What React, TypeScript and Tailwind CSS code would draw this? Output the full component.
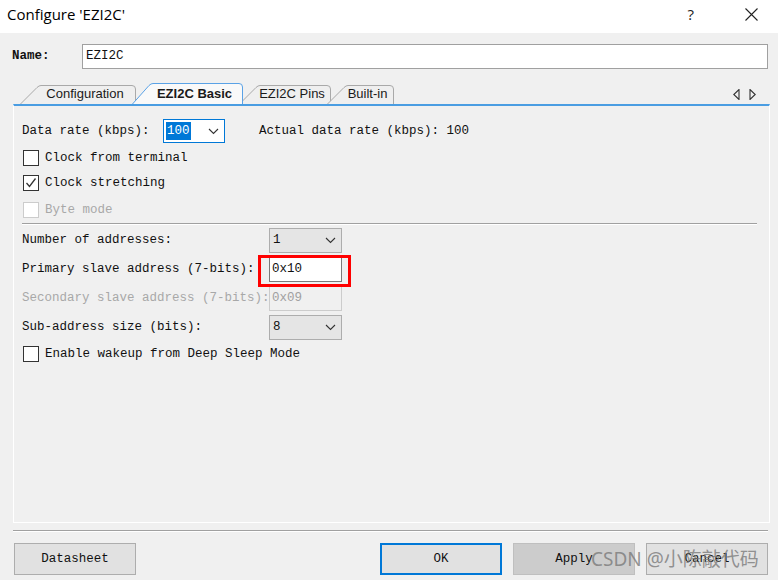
import React from "react";

const mono = "font-['Liberation_Mono',monospace] text-[12.5px] text-[#111]";

function Tab({ label, width, active }: { label: string; width: number; active?: boolean }) {
  const h = active ? 22 : 20;
  const d = `M0.5,${h} L17,${3.5} Q19,1.5 21,1.5 L${width - 5},1.5 Q${width - 1.5},1.5 ${width - 1.5},5 L${width - 1.5},${h}`;
  return (
    <div
      className={`relative flex items-end ${active ? "z-10 h-[22px]" : "h-[20px]"} -ml-[5px] first:ml-0`}
      style={{ width }}
    >
      <svg className="absolute inset-0" width={width} height={h}>
        <path d={d} fill={active ? "#f9f9f9" : "#efefef"} stroke={active ? "#5aa2e6" : "#a9a9a9"} strokeWidth="1" />
      </svg>
      <span
        className={`relative w-full pl-[16px] pr-[3px] pb-[1px] text-center whitespace-nowrap font-['Liberation_Sans',sans-serif] text-[13px] text-[#1a1a1a] ${active ? "font-bold" : ""}`}
      >
        {label}
      </span>
    </div>
  );
}

function Check({ label, checked, disabled }: { label: string; checked?: boolean; disabled?: boolean }) {
  return (
    <div className="flex items-center h-[24px]">
      <div
        className={`w-[16px] h-[16px] border ${disabled ? "border-[#cccccc]" : "border-[#333]"} bg-white flex items-center justify-center ml-[1px]`}
      >
        {checked && (
          <svg width="12" height="12" viewBox="0 0 12 12">
            <path d="M1.5,6 L4.5,9.5 L10.5,1.5" fill="none" stroke="#333" strokeWidth="1.3" />
          </svg>
        )}
      </div>
      <span className={`ml-[6px] ${mono} ${disabled ? "!text-[#a8a8a8]" : ""}`}>{label}</span>
    </div>
  );
}

function Chevron() {
  return (
    <svg width="11" height="7" viewBox="0 0 11 7">
      <path d="M1,1 L5.5,5.5 L10,1" fill="none" stroke="#333" strokeWidth="1.1" />
    </svg>
  );
}

function Btn({ label, kind }: { label: string; kind?: "primary" | "disabled" }) {
  const cls =
    kind === "primary"
      ? "border-2 border-[#0078d7] bg-[#e1e1e1] text-[#111]"
      : kind === "disabled"
      ? "border border-[#bfbfbf] bg-[#cccccc] text-[#8a8a8a]"
      : "border border-[#adadad] bg-[#e1e1e1] text-[#111]";
  return (
    <div className={`w-[122px] h-[32px] flex items-center justify-center ${cls} ${mono}`}>{label}</div>
  );
}

export default function App() {
  return (
    <div className="w-[778px] h-[580px] bg-[#f0f0f0] overflow-hidden flex flex-col">
      {/* title bar */}
      <div className="h-[33px] bg-white flex items-center shrink-0">
        <span className="ml-[7px] -mt-[4px] font-['Open_Sans',sans-serif] text-[15px] text-black">
          Configure 'EZI2C'
        </span>
        <span className="ml-auto -mt-[4px] font-['Open_Sans',sans-serif] text-[15px] text-[#222]">?</span>
        <svg className="ml-[51px] mr-[20px] -mt-[4px]" width="13" height="13" viewBox="0 0 13 13">
          <path d="M0.5,0.5 L12.5,12.5 M12.5,0.5 L0.5,12.5" stroke="#222" strokeWidth="1.1" />
        </svg>
      </div>

      {/* name */}
      <div className="flex items-center mt-[11px] h-[25px]">
        <span className={`ml-[12px] w-[70px] ${mono} font-bold`}>Name:</span>
        <div className="w-[686px] h-[25px] border border-[#a0a0a0] bg-white flex items-center pl-[3px]">
          <span className={mono}>EZI2C</span>
        </div>
      </div>

      {/* tabs */}
      <div className="flex items-end h-[22px] mt-[13px] ml-[20px] mr-[8px]">
        <Tab label="Configuration" width={117} />
        <Tab label="EZI2C Basic" width={112} active />
        <Tab label="EZI2C Pins" width={93} />
        <Tab label="Built-in" width={68} />
        <div className="ml-auto mb-[4px] mr-[14px] flex gap-[9px]">
          <svg width="7" height="11" viewBox="0 0 7 11">
            <path d="M6,0.5 L6,10.5 L0.8,5.5 Z" fill="none" stroke="#333" strokeWidth="1.1" />
          </svg>
          <svg width="7" height="11" viewBox="0 0 7 11">
            <path d="M1,0.5 L1,10.5 L6.2,5.5 Z" fill="none" stroke="#333" strokeWidth="1.1" />
          </svg>
        </div>
      </div>

      {/* panel */}
      <div className="ml-[13px] w-[757px] h-[419px] border-t-2 border-t-[#4a9de2] border-l border-r border-b border-l-white border-r-white border-b-white pl-[8px] pr-[12px] pt-[13px] flex flex-col">
        <div className="flex items-center h-[24px]">
          <span className={`w-[141px] ${mono}`}>Data rate (kbps):</span>
          <div className="w-[62px] h-[24px] bg-white border border-[#0078d7] flex items-center pl-[2px] pr-[5px]">
            <span className={`bg-[#0078d7] !text-white px-[1px] ${mono}`}>100</span>
            <span className="ml-auto">
              <Chevron />
            </span>
          </div>
          <span className={`ml-[34px] ${mono}`}>Actual data rate (kbps): 100</span>
        </div>
        <div className="mt-[3px]">
          <Check label="Clock from terminal" />
        </div>
        <div className="mt-[1px]">
          <Check label="Clock stretching" checked />
        </div>
        <div className="mt-[3px]">
          <Check label="Byte mode" disabled />
        </div>
        <div className="mt-[1px] h-[2px] border-t border-t-[#a0a0a0] border-b border-b-white" />

        <div className="flex items-center h-[25px] mt-[3px]">
          <span className={`w-[247px] ${mono}`}>Number of addresses:</span>
          <div className="w-[73px] h-[25px] bg-[#e5e5e5] border border-[#adadad] flex items-center pl-[3px] pr-[5px]">
            <span className={mono}>1</span>
            <span className="ml-auto">
              <Chevron />
            </span>
          </div>
        </div>
        <div className="flex items-center h-[25px] mt-[4px]">
          <span className={`w-[247px] whitespace-nowrap ${mono}`}>Primary slave address (7-bits):</span>
          <div className="relative w-[73px] h-[25px] bg-white border border-[#7a7a7a] flex items-center pl-[2px]">
            <span className={mono}>0x10</span>
            <div className="absolute -left-[12px] -top-[3px] w-[93px] h-[32px] border-[3px] border-[#ff0000]" />
          </div>
        </div>
        <div className="flex items-center h-[25px] mt-[4px]">
          <span className={`w-[247px] whitespace-nowrap ${mono} !text-[#a8a8a8]`}>Secondary slave address (7-bits):</span>
          <div className="w-[73px] h-[25px] bg-[#f0f0f0] border border-[#cccccc] flex items-center pl-[2px]">
            <span className={`${mono} !text-[#a0a0a0]`}>0x09</span>
          </div>
        </div>
        <div className="flex items-center h-[25px] mt-[4px]">
          <span className={`w-[247px] ${mono}`}>Sub-address size (bits):</span>
          <div className="w-[73px] h-[25px] bg-[#e5e5e5] border border-[#adadad] flex items-center pl-[3px] pr-[5px]">
            <span className={mono}>8</span>
            <span className="ml-auto">
              <Chevron />
            </span>
          </div>
        </div>
        <div className="mt-[2px]">
          <Check label="Enable wakeup from Deep Sleep Mode" />
        </div>
      </div>

      {/* bottom separator */}
      <div className="ml-[13px] w-[755px] mt-[7px] h-[2px] border-t border-t-[#a0a0a0] border-b border-b-white" />

      {/* buttons */}
      <div className="relative flex items-center mt-[11px] ml-[14px]">
        <Btn label="Datasheet" />
        <div className="ml-[244px] flex gap-[11px]">
          <Btn label="OK" kind="primary" />
          <Btn label="Apply" kind="disabled" />
          <Btn label="Cancel" />
        </div>
        <span className="absolute left-[577px] top-[3px] font-['Noto_Sans','Noto_Sans_CJK_SC',sans-serif] text-[19px] leading-[26px] text-[#7a7a7a]/80 whitespace-nowrap">
          CSDN @小陈敲代码
        </span>
      </div>
    </div>
  );
}
